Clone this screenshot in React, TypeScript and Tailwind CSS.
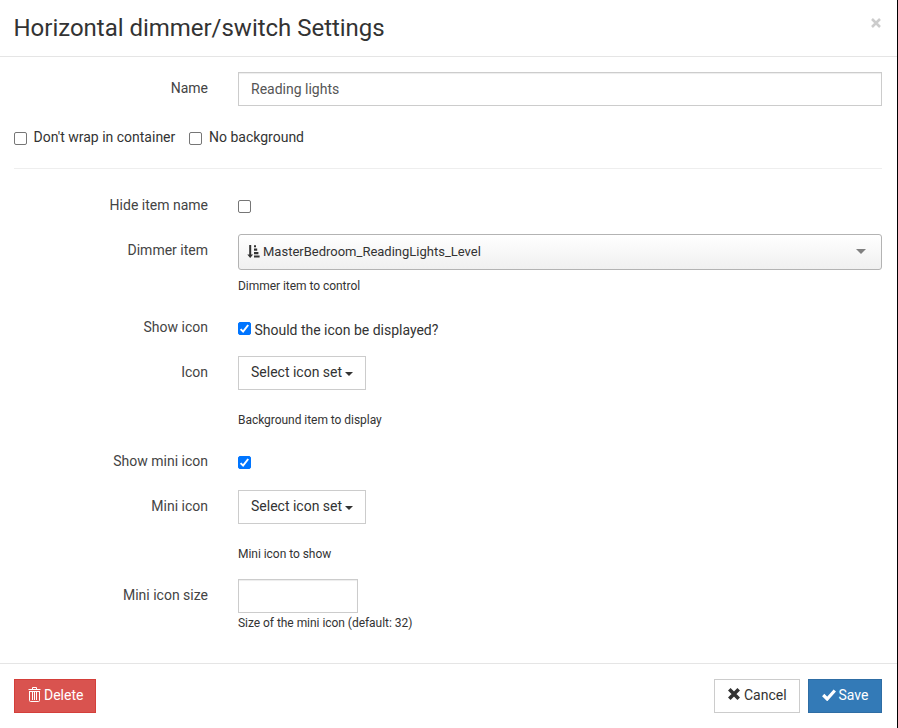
import type { ReactNode } from "react";

function Checkbox({ checked = false }: { checked?: boolean }) {
  return (
    <span className="relative block h-[13px] w-[13px] shrink-0">
      <input
        type="checkbox"
        defaultChecked={checked}
        className="block h-[13px] w-[13px] appearance-none rounded-[2px] border border-[#767676] bg-white checked:border-[#0075ff] checked:bg-[#0075ff]"
      />
      {checked && (
        <svg viewBox="0 0 13 13" className="pointer-events-none absolute inset-0 h-[13px] w-[13px]">
          <path d="M2.6 7.1 5.1 9.6 10.2 3" fill="none" stroke="#fff" strokeWidth="2" />
        </svg>
      )}
    </span>
  );
}

function Row({ label, className, children }: { label: string; className: string; children: ReactNode }) {
  return (
    <div className={`flex ${className}`}>
      <div className="w-[194px] shrink-0 pt-[6px] text-right text-[#444]">{label}</div>
      <div className="ml-[30px] min-w-0 flex-1">{children}</div>
    </div>
  );
}

function IconSetButton() {
  return (
    <button className="flex h-[34px] w-[128px] items-center border border-[#ccc] bg-white pb-[2px] pl-3 text-[#333]">
      <span className="whitespace-nowrap">Select icon set</span>
      <svg viewBox="0 0 8 4" className="mt-[3px] ml-[3px] h-1 w-2 shrink-0">
        <path d="M0 0h8L4 4z" fill="#333" />
      </svg>
    </button>
  );
}

function Help({ className, children }: { className: string; children: ReactNode }) {
  return <p className={`text-[12px] leading-[17px] tracking-[-0.04px] text-[#333] ${className}`}>{children}</p>;
}

export default function App() {
  return (
    <div className="h-[728px] w-[898px] overflow-hidden border-r border-black bg-white font-['Roboto',sans-serif] text-[14px] leading-5 text-[#333]">
      <header className="flex h-[57px] justify-between border-b border-[#e5e5e5] pr-[16px] pl-[14px]">
        <h4 className="-ml-[0.5px] pt-[11px] text-[24px] leading-[34px] tracking-[-0.02px]">Horizontal dimmer/switch Settings</h4>
        <button aria-label="Close" className="mt-[18px] h-[10px] w-[10px]">
          <svg viewBox="0 0 10 10" className="h-[10px] w-[10px]">
            <path d="m1 1 8 8M9 1 1 9" stroke="#ccc" strokeWidth="2.5" />
          </svg>
        </button>
      </header>
      <main className="h-[606px] pt-[15px] pr-[15px] pl-[14px]">
        <Row label="Name" className="h-[60px]">
          <input
            defaultValue="Reading lights"
            className="block h-[34px] w-full border border-[#ccc] bg-white px-3 text-[#555] shadow-[inset_0_1px_1px_rgba(0,0,0,0.075)]"
          />
        </Row>
        <div className="flex h-[13px] items-center">
          <Checkbox />
          <span className="-mt-[3px] ml-[6.5px] w-[155.5px]">Don't wrap in container</span>
          <Checkbox />
          <span className="-mt-[3px] ml-[7px]">No background</span>
        </div>
        <hr className="mt-[23px] mb-5 border-[#eee]" />
        <Row label="Hide item name" className="h-[45px]">
          <div className="pt-[11px]">
            <Checkbox />
          </div>
        </Row>
        <Row label="Dimmer item" className="h-[77px]">
          <div className="flex h-[36px] items-center rounded-[3px] border border-[#b3b3b3] bg-linear-to-b from-white to-[#f0f0f0] pr-[15px] pl-[8px] text-[13px]">
            <svg viewBox="0 0 13 13" className="-mt-[2px] mr-[3px] h-[13px] w-[13px] shrink-0" fill="#333">
              <path d="M2.2 0h2v9.5h1.9L3.2 13 .3 9.5h1.9zM7 .3h2v2H7zM7 3.6h3.2v2.2H7zM7 7h4.4v2.2H7zM7 10.4h5.6v2.2H7z" />
            </svg>
            <span className="flex-1">MasterBedroom_ReadingLights_Level</span>
            <svg viewBox="0 0 10 5" className="-mt-[1px] h-[5px] w-[10px]">
              <path d="M0 0h10L5 5z" fill="#808080" />
            </svg>
          </div>
          <Help className="mt-[8px]">Dimmer item to control</Help>
        </Row>
        <Row label="Show icon" className="h-[45px]">
          <div className="flex pt-[11px]">
            <Checkbox checked />
            <span className="-mt-[2px] ml-[3.5px] tracking-[-0.01px]">Should the icon be displayed?</span>
          </div>
        </Row>
        <Row label="Icon" className="h-[89px]">
          <IconSetButton />
          <Help className="mt-[22px]">Background item to display</Help>
        </Row>
        <Row label="Show mini icon" className="h-[45px]">
          <div className="pt-[11px]">
            <Checkbox checked />
          </div>
        </Row>
        <Row label="Mini icon" className="h-[89px]">
          <IconSetButton />
          <Help className="mt-[22px]">Mini icon to show</Help>
        </Row>
        <Row label="Mini icon size" className="h-[60px]">
          <input
            aria-label="Mini icon size"
            className="block h-[34px] w-[120px] border border-[#ccc] bg-white px-3 shadow-[inset_0_1px_1px_rgba(0,0,0,0.075)]"
          />
          <Help className="mt-[2px]">Size of the mini icon (default: 32)</Help>
        </Row>
      </main>
      <footer className="flex h-[65px] border-t border-[#e5e5e5] pt-[15px] pr-[15px] pl-[14px]">
        <button className="mr-auto flex h-[34px] w-[82px] items-center border border-[#d43f3a] bg-[#d9534f] pb-[2px] pl-[12.5px] text-white">
          <svg viewBox="0 0 14 16" className="mr-[2.5px] -mt-[2px] h-4 w-[14px] shrink-0" fill="none" stroke="#fff">
            <path d="M.5 3.5h12M4.5 3V1.5h4V3M2 5.5h9M1.5 5v9.5q0 1 1 1h8q1 0 1-1V5M4.5 6v8M6.5 6v8M8.5 6v8" />
          </svg>
          Delete
        </button>
        <button className="flex h-[34px] w-[86px] items-center border border-[#ccc] bg-white pb-[2px] pl-[13px] text-[#333]">
          <svg viewBox="0 0 12 12" className="mr-[4px] -mt-[2px] h-3 w-3 shrink-0">
            <path d="m1.3 1.3 9.4 9.4M10.7 1.3l-9.4 9.4" stroke="#333" strokeWidth="3.6" />
          </svg>
          Cancel
        </button>
        <button className="ml-2 flex h-[34px] w-[74px] items-center border border-[#2e6da4] bg-[#337ab7] pb-[2px] pl-[13px] text-white">
          <svg viewBox="0 0 14 12" className="mr-[2.5px] -mt-[1px] h-3 w-[14px] shrink-0">
            <path d="m1.2 6 4 4L12.8 1.5" fill="none" stroke="#fff" strokeWidth="3.2" />
          </svg>
          Save
        </button>
      </footer>
    </div>
  );
}
